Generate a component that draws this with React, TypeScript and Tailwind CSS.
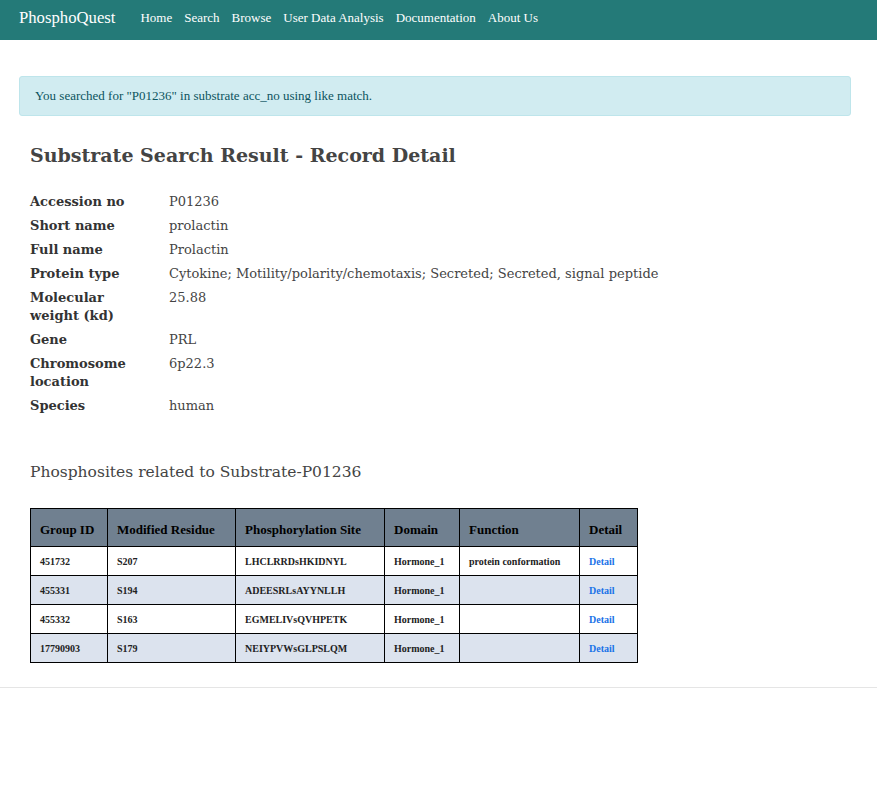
import React from "react";

const serif = { fontFamily: "'DejaVu Serif', Georgia, serif" };
const narrow = { fontFamily: "'Liberation Serif', 'Times New Roman', serif" };

const details: [string, string][] = [
  ["Accession no", "P01236"],
  ["Short name", "prolactin"],
  ["Full name", "Prolactin"],
  ["Protein type", "Cytokine; Motility/polarity/chemotaxis; Secreted; Secreted, signal peptide"],
  ["Molecular weight (kd)", "25.88"],
  ["Gene", "PRL"],
  ["Chromosome location", "6p22.3"],
  ["Species", "human"],
];

const sites = [
  { id: "451732", res: "S207", site: "LHCLRRDsHKIDNYL", domain: "Hormone_1", fn: "protein conformation" },
  { id: "455331", res: "S194", site: "ADEESRLsAYYNLLH", domain: "Hormone_1", fn: "" },
  { id: "455332", res: "S163", site: "EGMELIVsQVHPETK", domain: "Hormone_1", fn: "" },
  { id: "17790903", res: "S179", site: "NEIYPVWsGLPSLQM", domain: "Hormone_1", fn: "" },
];

const navLinks = ["Home", "Search", "Browse", "User Data Analysis", "Documentation", "About Us"];

export default function App() {
  return (
    <div className="min-h-[801px] bg-white text-[#444]" style={serif}>
      <nav className="flex h-10 items-center bg-[#247a78] px-[19px] pb-1" style={narrow}>
        <span className="mr-[25px] text-[16.7px] text-white">PhosphoQuest</span>
        <div className="flex gap-3">
          {navLinks.map((l) => (
            <a key={l} className="text-[13px] text-white">
              {l}
            </a>
          ))}
        </div>
      </nav>

      <div className="pl-[19px] pr-[26px] pt-9">
        <div
          className="rounded-[3px] border border-[#bee5eb] bg-[#d1ecf1] px-[15px] py-[9px] text-[13px] text-[#0c5460]"
          style={narrow}
        >
          You searched for "P01236" in substrate acc_no using like match.
        </div>

        <div className="px-[11px]">
          <h2 className="mt-[25px] text-[19px] font-bold text-[#444]">
            Substrate Search Result - Record Detail
          </h2>

          <dl className="mt-[24px] flex flex-col gap-[6px] text-[13px] leading-[18px]">
            {details.map(([k, v]) => (
              <div key={k} className="flex">
                <dt className="w-[139px] shrink-0 pr-6 font-bold text-[#333]">{k}</dt>
                <dd>{v}</dd>
              </div>
            ))}
          </dl>

          <h3 className="mt-[46px] text-[15.5px] text-[#444]">
            Phosphosites related to Substrate-P01236
          </h3>

          <table className="mt-[24px] border-collapse border border-black" style={narrow}>
            <thead>
              <tr className="h-[38px] bg-[#708090] text-left text-[13px] font-bold text-black">
                <th className="w-[77px] border border-black px-[9px] pt-1">Group ID</th>
                <th className="w-[128px] border border-black px-[9px] pt-1">Modified Residue</th>
                <th className="w-[149px] border border-black px-[9px] pt-1">Phosphorylation Site</th>
                <th className="w-[75px] border border-black px-[9px] pt-1">Domain</th>
                <th className="w-[120px] border border-black px-[9px] pt-1">Function</th>
                <th className="w-[58px] border border-black px-[9px] pt-1">Detail</th>
              </tr>
            </thead>
            <tbody className="text-[10px] font-bold text-[#222]">
              {sites.map((s, i) => (
                <tr key={s.id} className={`h-[29px] ${i % 2 ? "bg-[#dce3ee]" : "bg-white"}`}>
                  <td className="border border-black px-[9px]">{s.id}</td>
                  <td className="border border-black px-[9px]">{s.res}</td>
                  <td className="border border-black px-[9px]">{s.site}</td>
                  <td className="border border-black px-[9px]">{s.domain}</td>
                  <td className="whitespace-nowrap border border-black px-[9px]">{s.fn}</td>
                  <td className="border border-black px-[9px]">
                    <a className="text-[#1a73e8]">Detail</a>
                  </td>
                </tr>
              ))}
            </tbody>
          </table>
        </div>
      </div>

      <hr className="mt-[24px] border-t border-[#e5e5e5]" />
    </div>
  );
}
